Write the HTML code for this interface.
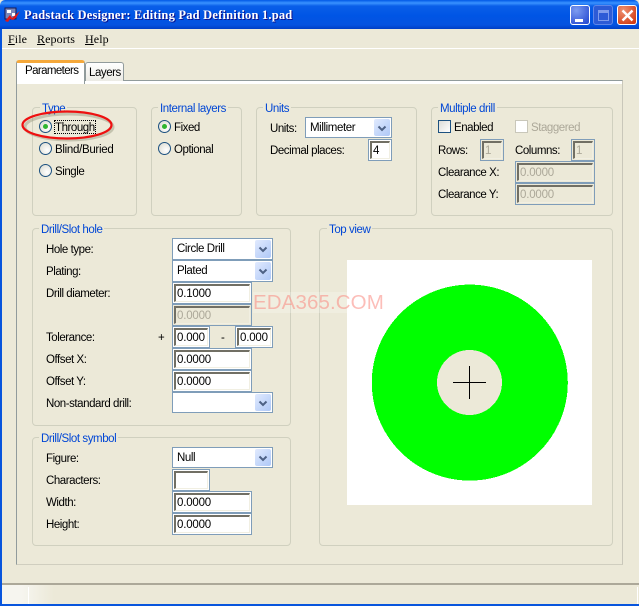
<!DOCTYPE html>
<html><head><meta charset="utf-8"><style>
html,body{margin:0;padding:0;background:#ece9d8;}
#w{position:relative;width:639px;height:606px;overflow:hidden;background:#ece9d8;font-family:"Liberation Sans",sans-serif;font-size:11.5px;color:#000;}
#w div,#w span.a{position:absolute;box-sizing:border-box;}
.t{white-space:nowrap;line-height:14px;height:14px;letter-spacing:-.45px;margin-top:1px;}
.g{border:1px solid #d0d0bf;border-radius:4px;}
.l{color:#0046d5;background:#ece9d8;padding:0 2px;white-space:nowrap;line-height:14px;height:14px;letter-spacing:-.42px;margin-top:1px;}
.f{background:#fff;border:1px solid #7f9db9;border-radius:0;}
.f>i{position:absolute;left:1px;top:1px;right:1px;bottom:1px;border-top:2px solid #716f64;border-left:2px solid #716f64;border-right:1px solid #f1efe2;border-bottom:1px solid #f1efe2;display:block;padding-left:1px;font-style:normal;line-height:16px;letter-spacing:-.2px;white-space:nowrap;overflow:hidden;}
.f.d{background:#ece9d8;}
.f.d>i{color:#aca899;}
.s{background:#fff;border:1px solid #7f9db9;line-height:20px;padding-left:4px;letter-spacing:-.4px;white-space:nowrap;}
.b{position:absolute;right:1px;top:1px;bottom:1px;width:16px;background:linear-gradient(135deg,#e1eafe,#aec8f7);border-radius:2px;}
.b svg{position:absolute;left:3px;top:6px;}
.r{width:13px;height:13px;border-radius:50%;border:1px solid #1c5180;background:radial-gradient(circle at 65% 65%,#fff,#dcdcd2 90%);}
.r.c:after{content:"";position:absolute;left:3px;top:3px;width:5px;height:5px;border-radius:50%;background:#2fb52f;}
</style></head><body><div id="w">

<div style="left:0;top:0;width:639px;height:29px;background:linear-gradient(#0058e6 0,#3a93ff 3px,#0a5fe8 6px,#0055e5 16px,#0553e0 25px,#003fc4 29px);border-radius:5px 5px 0 0;"></div>
<svg style="position:absolute;left:4px;top:7px" width="18" height="16" viewBox="0 0 18 16"><rect x="1" y="1" width="11" height="11" fill="#7a86b8" stroke="#1a1a50"/><rect x="3" y="3" width="4" height="3" fill="#fff"/><rect x="8" y="6" width="3" height="3" fill="#fff"/><path d="M1 14 L6 8 L8 11 L16 4 L12 11 L9 13 L6 12 L4 15Z" fill="#e01818"/></svg>
<div class="t" style="left:24px;top:8px;margin:0;color:#fff;font:bold 12.5px/14px 'Liberation Serif',serif;letter-spacing:.2px;text-shadow:1px 1px 0 #0f1089;height:14px;">Padstack Designer: Editing Pad Definition 1.pad</div>
<div style="left:570px;top:5px;width:20px;height:20px;border:1px solid #fff;border-radius:3px;background:radial-gradient(circle at 30% 25%,#7d9cf0,#2c50d4 85%);"><div style="left:4px;top:13px;width:8px;height:3px;background:#fff;"></div></div>
<div style="left:593px;top:5px;width:20px;height:20px;border:1px solid #5f86e8;border-radius:3px;background:#2d5bd6;"><div style="left:4px;top:4px;width:11px;height:11px;border:1px solid #7f9cec;border-top:3px solid #7f9cec;"></div></div>
<div style="left:617px;top:5px;width:20px;height:20px;border:1px solid #fff;border-radius:3px;background:radial-gradient(circle at 30% 25%,#ee9272,#d23c14 85%);"><svg style="position:absolute;left:3px;top:3px" width="13" height="13"><path d="M1.5 1.5L11.5 11.5M11.5 1.5L1.5 11.5" stroke="#fff" stroke-width="2.4"/></svg></div>

<div style="left:0;top:29px;width:2px;height:577px;background:#0855dd;"></div>
<div style="left:0;top:604px;width:639px;height:2px;background:#0855dd;"></div>

<div class="t" style="left:8px;top:32px;margin:0;font:12px/14px 'Liberation Serif',serif;letter-spacing:.1px;"><u>F</u>ile</div>
<div class="t" style="left:37px;top:32px;margin:0;font:12px/14px 'Liberation Serif',serif;letter-spacing:.1px;"><u>R</u>eports</div>
<div class="t" style="left:85px;top:32px;margin:0;font:12px/14px 'Liberation Serif',serif;letter-spacing:.1px;"><u>H</u>elp</div>
<div style="left:2px;top:48px;width:637px;height:1px;background:#fff;"></div>

<div style="left:16px;top:80px;width:607px;height:485px;border:1px solid #919b9c;border-right-color:#c9c7ba;border-bottom-color:#d0cebf;background:#ece9d8;"><div style="left:0;top:0;right:0;height:3px;background:#fff;"></div></div>

<div style="left:85px;top:62px;width:39px;height:19px;background:linear-gradient(#fff,#ecebe5);border:1px solid #919b9c;border-bottom:none;border-radius:3px 3px 0 0;"></div>
<div class="t" style="left:89px;top:65px;">Layers</div>
<div style="left:16px;top:60px;width:69px;height:24px;background:#fff;border-left:1px solid #919b9c;border-right:1px solid #919b9c;border-top:3px solid #f5a83a;border-radius:3px 3px 0 0;"></div>
<div class="t" style="left:25px;top:63px;letter-spacing:-.6px;">Parameters</div>

<div class="g" style="left:32px;top:107px;width:105px;height:109px;"></div><div class="l" style="left:40px;top:101px;">Type</div>
<div class="g" style="left:151px;top:107px;width:91px;height:109px;"></div><div class="l" style="left:158px;top:101px;">Internal layers</div>
<div class="g" style="left:256px;top:107px;width:161px;height:109px;"></div><div class="l" style="left:263px;top:101px;">Units</div>
<div class="g" style="left:431px;top:107px;width:182px;height:109px;"></div><div class="l" style="left:438px;top:101px;">Multiple drill</div>
<div class="g" style="left:32px;top:228px;width:259px;height:198px;"></div><div class="l" style="left:39px;top:222px;">Drill/Slot hole</div>
<div class="g" style="left:32px;top:437px;width:259px;height:109px;"></div><div class="l" style="left:39px;top:431px;">Drill/Slot symbol</div>
<div class="g" style="left:319px;top:228px;width:294px;height:318px;"></div><div class="l" style="left:327px;top:222px;">Top view</div>

<div class="r c" style="left:39px;top:120px;"></div><div class="t" style="left:55px;top:120px;">Through</div>
<div style="left:54px;top:120px;width:42px;height:14px;border:1px dotted #000;"></div>
<div class="r" style="left:39px;top:142px;"></div><div class="t" style="left:55px;top:142px;letter-spacing:-.3px;">Blind/Buried</div>
<div class="r" style="left:39px;top:164px;"></div><div class="t" style="left:55px;top:164px;">Single</div>
<div class="r c" style="left:158px;top:120px;"></div><div class="t" style="left:174px;top:120px;">Fixed</div>
<div class="r" style="left:158px;top:142px;"></div><div class="t" style="left:174px;top:142px;">Optional</div>

<div class="t" style="left:270px;top:121px;">Units:</div>
<div class="s" style="left:305px;top:117px;width:87px;height:21px;">Millimeter<div class="b"><svg width="10" height="8"><path d="M1.5 1.5L5 5L8.5 1.5" fill="none" stroke="#4d6185" stroke-width="2"/></svg></div></div>
<div class="t" style="left:270px;top:143px;">Decimal places:</div>
<div class="f" style="left:368px;top:139px;width:24px;height:22px;"><i>4</i></div>

<div style="left:438px;top:120px;width:13px;height:13px;border:1px solid #1c5180;background:linear-gradient(135deg,#dcdcd7,#fff);"></div><div class="t" style="left:454px;top:120px;">Enabled</div>
<div style="left:515px;top:120px;width:13px;height:13px;border:1px solid #c9c7ba;background:#fff;"></div><div class="t" style="left:531px;top:120px;color:#aca899;">Staggered</div>
<div class="t" style="left:438px;top:143px;">Rows:</div>
<div class="f d" style="left:480px;top:139px;width:24px;height:22px;"><i>1</i></div>
<div class="t" style="left:515px;top:143px;">Columns:</div>
<div class="f d" style="left:571px;top:139px;width:24px;height:22px;"><i>1</i></div>
<div class="t" style="left:438px;top:165px;">Clearance X:</div>
<div class="f d" style="left:515px;top:161px;width:80px;height:22px;"><i>0.0000</i></div>
<div class="t" style="left:438px;top:187px;">Clearance Y:</div>
<div class="f d" style="left:515px;top:183px;width:80px;height:22px;"><i>0.0000</i></div>

<div class="t" style="left:46px;top:242px;">Hole type:</div>
<div class="s" style="left:172px;top:238px;width:101px;height:22px;">Circle Drill<div class="b"><svg width="10" height="8"><path d="M1.5 1.5L5 5L8.5 1.5" fill="none" stroke="#4d6185" stroke-width="2"/></svg></div></div>
<div class="t" style="left:46px;top:264px;">Plating:</div>
<div class="s" style="left:172px;top:260px;width:101px;height:22px;">Plated<div class="b"><svg width="10" height="8"><path d="M1.5 1.5L5 5L8.5 1.5" fill="none" stroke="#4d6185" stroke-width="2"/></svg></div></div>
<div class="t" style="left:46px;top:286px;">Drill diameter:</div>
<div class="f" style="left:172px;top:282px;width:80px;height:22px;"><i>0.1000</i></div>
<div class="f d" style="left:172px;top:304px;width:80px;height:22px;"><i>0.0000</i></div>
<div class="t" style="left:46px;top:330px;">Tolerance:</div>
<div class="t" style="left:158px;top:330px;">+</div>
<div class="f" style="left:172px;top:326px;width:38px;height:22px;"><i>0.000</i></div>
<div class="t" style="left:221px;top:330px;">-</div>
<div class="f" style="left:235px;top:326px;width:38px;height:22px;"><i>0.000</i></div>
<div class="t" style="left:46px;top:352px;">Offset X:</div>
<div class="f" style="left:172px;top:348px;width:80px;height:22px;"><i>0.0000</i></div>
<div class="t" style="left:46px;top:374px;">Offset Y:</div>
<div class="f" style="left:172px;top:370px;width:80px;height:22px;"><i>0.0000</i></div>
<div class="t" style="left:46px;top:396px;">Non-standard drill:</div>
<div class="s" style="left:172px;top:392px;width:101px;height:21px;"><div class="b"><svg width="10" height="8"><path d="M1.5 1.5L5 5L8.5 1.5" fill="none" stroke="#4d6185" stroke-width="2"/></svg></div></div>

<div class="t" style="left:46px;top:451px;">Figure:</div>
<div class="s" style="left:172px;top:447px;width:101px;height:21px;">Null<div class="b"><svg width="10" height="8"><path d="M1.5 1.5L5 5L8.5 1.5" fill="none" stroke="#4d6185" stroke-width="2"/></svg></div></div>
<div class="t" style="left:46px;top:473px;">Characters:</div>
<div class="f" style="left:172px;top:469px;width:38px;height:22px;"><i></i></div>
<div class="t" style="left:46px;top:495px;">Width:</div>
<div class="f" style="left:172px;top:491px;width:80px;height:22px;"><i>0.0000</i></div>
<div class="t" style="left:46px;top:517px;">Height:</div>
<div class="f" style="left:172px;top:513px;width:80px;height:22px;"><i>0.0000</i></div>

<div style="left:347px;top:260px;width:245px;height:245px;background:#fff;"></div>
<svg style="position:absolute;left:347px;top:260px" width="245" height="245" shape-rendering="crispEdges"><circle cx="122.8" cy="122.6" r="98" fill="#00ff00"/><circle cx="122.5" cy="122.5" r="32.5" fill="#ece9d8"/><path d="M106 122.5H139M122.5 106V139" stroke="#000" stroke-width="1"/></svg>

<div style="left:253px;top:292px;width:94px;height:21px;background:#fff;opacity:.22;"></div>
<div class="t" style="left:253px;top:291px;height:22px;line-height:22px;font-size:20.5px;color:#fa8a80;opacity:.55;letter-spacing:.1px;">EDA365.COM</div>

<svg style="position:absolute;left:0;top:100px" width="130" height="50"><ellipse cx="69" cy="27" rx="44" ry="13" fill="none" stroke="#8a8a70" stroke-opacity=".4" stroke-width="3"/><ellipse cx="67" cy="25" rx="44.5" ry="13.5" fill="none" stroke="#ee1010" stroke-width="2.2"/></svg>

<div style="left:2px;top:583px;width:637px;height:2px;background:#aca899;"></div>
<div style="left:2px;top:585px;width:637px;height:19px;background:linear-gradient(90deg,#f6f5ef 0,#f6f5ef 20px,#ece9d8 52px);"></div>
<div style="left:28px;top:587px;width:1px;height:17px;background:#fff;"></div>
<div style="left:637px;top:587px;width:1px;height:17px;background:#fff;"></div>

</div></body></html>
